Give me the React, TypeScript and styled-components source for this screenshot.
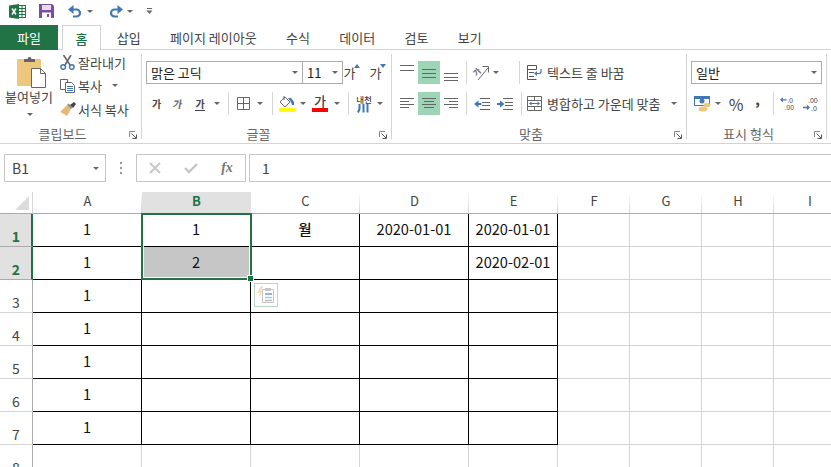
import React from 'react';
import styled, { createGlobalStyle } from 'styled-components';

const GREEN = '#217346';
const LINE = '#d4d4d4';

const Global = createGlobalStyle`
  html, body { margin: 0; padding: 0; background: #fff; }
  * { box-sizing: border-box; }
`;

const Page = styled.div`
  width: 831px;
  height: 467px;
  overflow: hidden;
  display: flex;
  flex-direction: column;
  background: #fff;
  color: #444;
  font-family: "Noto Sans CJK KR", "Noto Sans", sans-serif;
  font-size: 13px;
`;

/* quick access */
const TitleBar = styled.div`
  height: 25px;
  display: flex;
  align-items: center;
  padding: 0 0 3px 9px;
  flex-shrink: 0;
`;

const QuickItem = styled.span<{ $left?: number }>`
  display: inline-flex;
  align-items: center;
  margin-left: ${p => p.$left ?? 0}px;
`;

/* tabs */
const TabBar = styled.div`
  height: 25px;
  display: flex;
  flex-shrink: 0;
  border-bottom: 1px solid ${LINE};
`;

const FileTab = styled.div`
  width: 58px;
  height: 25px;
  background: ${GREEN};
  color: #fff;
  display: flex;
  align-items: center;
  justify-content: center;
  margin-right: 4px;
`;

const HomeTab = styled.div`
  width: 39px;
  height: 25px;
  border: 1px solid ${LINE};
  border-bottom: none;
  background: #fff;
  color: ${GREEN};
  font-weight: 500;
  display: flex;
  align-items: center;
  justify-content: center;
  margin-right: 1px;
`;

const Tab = styled.div`
  padding: 0 14.7px;
  height: 24px;
  display: flex;
  align-items: center;
  white-space: nowrap;
`;

/* ribbon */
const Ribbon = styled.div`
  height: 94px;
  flex-shrink: 0;
  display: flex;
  padding-top: 4px;
  border-bottom: 1px solid ${LINE};
`;

const Group = styled.div<{ $w: number }>`
  width: ${p => p.$w}px;
  height: 89px;
  display: flex;
  flex-direction: column;
  justify-content: space-between;
`;

const GroupDivider = styled.div`
  width: 1px;
  height: 85px;
  background: ${LINE};
`;

const GroupBody = styled.div`
  display: flex;
  padding: 7px 0 0 4px;
`;

const ClipBody = styled.div`
  display: flex;
`;

const Footer = styled.div`
  height: 20px;
  display: flex;
  align-items: center;
  color: #666;
`;

const FooterLabel = styled.div`
  flex: 1;
  text-align: center;
  padding-right: 4px;
  white-space: nowrap;
`;

const Launcher = styled.svg`
  margin: 4px 4px 0 0;
`;

const Stack = styled.div<{ $w?: number }>`
  display: flex;
  flex-direction: column;
  gap: 8px;
  ${p => (p.$w ? `width: ${p.$w}px;` : '')}
`;

const ActionStack = styled(Stack)`
  padding-left: 3px;
`;

const Row = styled.div`
  display: flex;
  align-items: center;
  height: 23px;
`;

const Slot = styled.div<{ $w: number; $on?: boolean }>`
  width: ${p => p.$w}px;
  height: 23px;
  flex-shrink: 0;
  display: flex;
  align-items: center;
  justify-content: center;
  background: ${p => (p.$on ? '#9fd5b7' : 'transparent')};
`;

const Sep = styled.div<{ $w: number; $push?: boolean }>`
  width: ${p => p.$w}px;
  height: 23px;
  flex-shrink: 0;
  ${p => (p.$push ? 'margin-left: auto;' : '')}
  display: flex;
  justify-content: center;
  &::before {
    content: "";
    width: 1px;
    background: ${LINE};
  }
`;

const Caret = styled.span`
  display: inline-block;
  width: 0;
  height: 0;
  border-left: 3px solid transparent;
  border-right: 3px solid transparent;
  border-top: 3px solid #666;
`;

const PasteButton = styled.div`
  width: 60px;
  padding-top: 2px;
  display: flex;
  flex-direction: column;
  align-items: center;
`;

const PasteArt = styled.span`
  display: flex;
  margin-left: 3px;
`;

const PasteText = styled.div`
  line-height: 18px;
  margin: 0 0 7px -2px;
  white-space: nowrap;
`;

const ClipList = styled.div`
  display: flex;
  flex-direction: column;
  gap: 9.5px;
  padding-top: 1px;
`;

const ClipItem = styled.div`
  height: 14px;
  display: flex;
  align-items: center;
  white-space: nowrap;
`;

const ClipIcon = styled.span`
  width: 18px;
  display: flex;
`;

const ClipCaret = styled.span`
  display: flex;
  margin-left: 10px;
`;

const Select = styled.div<{ $w: number; $joined?: boolean }>`
  width: ${p => p.$w}px;
  height: 23px;
  flex-shrink: 0;
  border: 1px solid #ababab;
  ${p => (p.$joined ? 'border-left: none;' : '')}
  background: #fff;
  color: #222;
  display: flex;
  align-items: center;
  justify-content: space-between;
  padding: 0 4px 0 4px;
`;

const Ga = styled.span<{ $italic?: boolean; $under?: boolean }>`
  font-size: 10px;
  font-weight: 700;
  line-height: 13px;
  color: #444;
  ${p => (p.$italic ? 'transform: skewX(-10deg); color: #666;' : '')}
  ${p => (p.$under ? 'border-bottom: 1px solid #444;' : '')}
`;

const GrowGa = styled.span`
  font-size: 13px;
  line-height: 15px;
  margin-bottom: 1px;
`;

const SmallMark = styled.svg`
  margin: -13px 0 0 -1px;
`;

const ColorPick = styled.div<{ $bar: string }>`
  display: flex;
  flex-direction: column;
  align-items: center;
  width: 16px;
  height: 18px;
  margin-bottom: 2px;
  justify-content: flex-end;
  border-bottom: 4px solid ${p => p.$bar};
`;

const ColorGa = styled.span`
  font-size: 13px;
  line-height: 14px;
  font-weight: 500;
`;

const Phonetic = styled.div`
  display: flex;
  flex-direction: column;
  align-items: center;
`;

const PhoneticText = styled.span`
  font-size: 8.5px;
  line-height: 9px;
  font-weight: 500;
  white-space: nowrap;
`;

const TextAction = styled.div`
  height: 23px;
  display: flex;
  align-items: center;
  white-space: nowrap;
  gap: 5px;
`;

const ActionCaret = styled.span`
  display: flex;
  margin-left: 6px;
`;

const Percent = styled.span`
  font-size: 16px;
  color: #444;
`;

const Comma = styled.span`
  font-size: 13px;
  font-weight: 900;
  line-height: 12px;
  margin-bottom: 8px;
`;

/* formula bar */
const FormulaBar = styled.div`
  height: 28px;
  margin: 10px 0;
  flex-shrink: 0;
  display: flex;
  padding-left: 4px;
`;

const NameBox = styled.div`
  width: 102px;
  border: 1px solid #c6c6c6;
  display: flex;
  align-items: center;
  justify-content: space-between;
  padding: 0 6px 0 7px;
  font-size: 14px;
`;

const Dots = styled.div`
  width: 30px;
  display: flex;
  flex-direction: column;
  align-items: center;
  justify-content: center;
  gap: 3px;
  & > span {
    width: 2px;
    height: 2px;
    background: #999;
  }
`;

const FxBox = styled.div`
  width: 110px;
  border: 1px solid #c6c6c6;
  display: flex;
  align-items: center;
`;

const FxSlot = styled.div`
  flex: 1;
  display: flex;
  justify-content: center;
  align-items: center;
`;

const FxText = styled.span`
  font-family: "Liberation Serif", serif;
  font-style: italic;
  font-weight: 700;
  font-size: 14px;
  color: #777;
`;

const FormulaInput = styled.div`
  flex: 1;
  margin-left: 3px;
  margin-right: -2px;
  border: 1px solid #c6c6c6;
  display: flex;
  align-items: center;
  padding-left: 12px;
  font-size: 14px;
`;

/* sheet */
const Sheet = styled.div`
  position: relative;
  display: grid;
  grid-template-columns: 33px 109px 109px 109px 109px 89px 72px 72px 72px 72px;
  grid-template-rows: 22px;
  grid-auto-rows: 33px;
`;

const Corner = styled.div`
  border-bottom: 1px solid #ababab;
  border-right: 1px solid ${LINE};
  position: relative;
  &::after {
    content: "";
    position: absolute;
    right: 3px;
    bottom: 3px;
    border-left: 14px solid transparent;
    border-bottom: 14px solid #dcdcdc;
  }
`;

const ColHead = styled.div<{ $on?: boolean }>`
  border-bottom: 1px solid #ababab;
  padding-bottom: 4px;
  display: flex;
  align-items: center;
  justify-content: center;
  background: ${p =>
    p.$on
      ? '#e1e1e1'
      : `linear-gradient(#fff, ${LINE}) right / 1px 100% no-repeat`};
  color: ${p => (p.$on ? GREEN : '#444')};
  font-weight: ${p => (p.$on ? 700 : 400)};
`;

const RowHead = styled.div<{ $on?: boolean }>`
  border-bottom: 1px solid ${p => (p.$on ? '#ababab' : LINE)};
  border-right: ${p => (p.$on ? `2px solid ${GREEN}` : '1px solid #ababab')};
  background: ${p => (p.$on ? '#e1e1e1' : '#fff')};
  color: ${p => (p.$on ? GREEN : '#444')};
  font-weight: ${p => (p.$on ? 700 : 400)};
  text-align: center;
  padding: ${p => (p.$on ? '12px 0 0 1px' : '12px 0 0')};
  line-height: 20px;
  font-size: 14px;
`;

const Cell = styled.div<{ $black?: boolean; $fill?: boolean; $strong?: boolean }>`
  border-right: 1px solid ${p => (p.$black ? '#000' : LINE)};
  border-bottom: 1px solid ${p => (p.$black ? '#000' : LINE)};
  background: ${p => (p.$fill ? '#c6c6c6' : '#fff')};
  color: #111;
  font-size: 14.6px;
  font-weight: ${p => (p.$strong ? 500 : 400)};
  padding-bottom: 3px;
  display: flex;
  align-items: center;
  justify-content: center;
  white-space: nowrap;
`;

const Selection = styled.div`
  position: absolute;
  left: 141px;
  top: 21px;
  width: 111px;
  height: 67px;
  border: 2px solid ${GREEN};
  box-shadow: inset 0 0 0 1px #fff;
  pointer-events: none;
`;

const FillHandle = styled.div`
  position: absolute;
  right: -4px;
  bottom: -4px;
  width: 7px;
  height: 7px;
  background: ${GREEN};
  border: 1px solid #fff;
`;

const PasteOptions = styled.div`
  position: absolute;
  left: 254px;
  top: 91px;
  width: 24px;
  height: 24px;
  border: 1px solid #b9d6c7;
  background: #fff;
  display: flex;
  align-items: center;
  justify-content: center;
`;

/* icons */
const ExcelLogo = () => (
  <svg width="18" height="15" viewBox="0 0 18 15">
    <rect x="6.5" y="1.5" width="10" height="12" fill="#fff" stroke={GREEN} />
    <path d="M10 4.5h6M10 7.5h6M10 10.5h6M13 2v11" stroke={GREEN} strokeWidth="1" />
    <path d="M0 1.6 10 0v15L0 13.4z" fill={GREEN} />
    <path d="M3 4.5 7 10.5M7 4.5 3 10.5" stroke="#fff" strokeWidth="1.5" />
  </svg>
);

const SaveIcon = () => (
  <svg width="15" height="14" viewBox="0 0 15 14">
    <path d="M0 0h13l2 2v12H0z" fill="#7d4d9e" />
    <rect x="3" y="1" width="9" height="5" fill="#e7dcef" />
    <rect x="3" y="8.5" width="9" height="5.5" fill="#fff" />
    <rect x="8" y="10" width="2" height="3" fill="#7d4d9e" />
  </svg>
);

const UndoIcon = ({ flip }: { flip?: boolean }) => (
  <svg width="15" height="13" viewBox="0 0 15 13" transform={flip ? 'scale(-1 1)' : undefined}>
    <path d="M0 4.5 5.5 0v9z" fill="#3f78b4" />
    <path d="M4 4.5h4.5a3.5 3.5 0 0 1 0 7H5" fill="none" stroke="#3f78b4" strokeWidth="2.2" />
  </svg>
);

const CustomizeIcon = () => (
  <svg width="7" height="6" viewBox="0 0 7 6">
    <path d="M1 .5h5" stroke="#666" />
    <path d="M.5 2.5h6L3.5 6z" fill="#666" />
  </svg>
);

const PasteIcon = () => (
  <svg width="29" height="32" viewBox="0 0 29 32">
    <rect x="0" y="3" width="24" height="27" rx="1" fill="#eec77f" />
    <path d="M7 6V3h3.5a2 2 0 0 1 4 0H18v3z" fill="#666" />
    <path d="M14.5 12.5h9l5 5v14h-14z" fill="#fff" stroke="#666" />
    <path d="M23.5 12.5v5h5" fill="none" stroke="#666" />
  </svg>
);

const ScissorsIcon = () => (
  <svg width="15" height="15" viewBox="0 0 15 15">
    <path d="M3.5 0 10 10M11 0 5 10" stroke="#666" strokeWidth="1.6" />
    <circle cx="3.2" cy="12" r="2.3" fill="none" stroke="#3f78b4" strokeWidth="1.5" />
    <circle cx="11.8" cy="12" r="2.3" fill="none" stroke="#3f78b4" strokeWidth="1.5" />
  </svg>
);

const CopyIcon = () => (
  <svg width="15" height="14" viewBox="0 0 15 14">
    <path d="M.5.5h7v10h-7z" fill="#fff" stroke="#666" />
    <path d="M5.5 3.5h6l3 3v7h-9z" fill="#fff" stroke="#666" />
    <path d="M7 7.5h6M7 9.5h6M7 11.5h6" stroke="#3f78b4" />
  </svg>
);

const BrushIcon = () => (
  <svg width="16" height="14" viewBox="0 0 16 14">
    <path d="M0 10 7 3l4 4-4 7-3-2z" fill="#e6b872" />
    <path d="M7 3l1.5-1.5 4 4L11 7z" fill="#888" />
    <path d="M10 3l4-3 2 2-3 4z" fill="#444" />
  </svg>
);

const LauncherIcon = () => (
  <Launcher width="8" height="8" viewBox="0 0 8 8">
    <path d="M.5 6V.5H6" fill="none" stroke="#888" />
    <path d="M2.5 2.5 7 7M7.5 3.5v4h-4" fill="none" stroke="#555" />
  </Launcher>
);

const GrowMark = ({ down }: { down?: boolean }) => (
  <SmallMark width="6" height="5" viewBox="0 0 6 5">
    <path d={down ? 'M0 0h6L3 4z' : 'M0 4h6L3 0z'} fill="#3f78b4" />
  </SmallMark>
);

const BorderIcon = () => (
  <svg width="13" height="13" viewBox="0 0 13 13">
    <path d="M.5.5h12v12H.5zM6.5.5v12M.5 6.5h12" fill="none" stroke="#666" />
  </svg>
);

const BucketIcon = () => (
  <svg width="16" height="12" viewBox="0 0 16 12">
    <path d="M1 6 6 1l5 5-5 5z" fill="#fff" stroke="#666" />
    <path d="M5 0v4" stroke="#666" />
    <path d="M9 2h3l3 4v3l-2 0-1-3z" fill="#3f78b4" />
  </svg>
);

const PhoneticBars = () => (
  <svg width="13" height="9" viewBox="0 0 13 9">
    <path d="M2.5 0v5L1 8.5M6.5 0v8.5M10.5 0v8.5" fill="none" stroke="#3f78b4" strokeWidth="2" />
  </svg>
);

const Lines = ({ rows, w = 14, h = 13 }: { rows: [number, number, number][]; w?: number; h?: number }) => (
  <svg width={w} height={h} viewBox={`0 0 ${w} ${h}`}>
    {rows.map(([x1, x2, y], i) => (
      <path key={i} d={`M${x1} ${y + 0.5}H${x2}`} stroke="#666" />
    ))}
  </svg>
);

const OrientIcon = () => (
  <svg width="20" height="20" viewBox="0 0 20 20">
    <text x="3.4" y="12" fontSize="8" fontWeight="700" fill="#666" fontFamily="Noto Sans CJK KR" transform="rotate(-45 7 9)">가</text>
    <path d="M18 5 8 17" stroke="#666" />
    <path d="M12.5 3.5H18.5V9.5" fill="none" stroke="#666" />
  </svg>
);

const IndentIcon = ({ right }: { right?: boolean }) => (
  <svg width="16" height="12" viewBox="0 0 16 12">
    <path d="M6 .5h10M8 4.5h8M8 7.5h8M6 11.5h10" stroke="#666" />
    {right ? (
      <path d="M0 5h3V2.5L7.5 6 3 9.5V7H0z" fill="#3f78b4" />
    ) : (
      <path d="M7.5 5h-3V2.5L0 6l4.5 3.5V7h3z" fill="#3f78b4" />
    )}
  </svg>
);

const WrapIcon = () => (
  <svg width="15" height="15" viewBox="0 0 15 15">
    <path d="M.5.5h9v4h-9zM.5 4.5v10h9M2 7.5h5M2 11.5h5" fill="none" stroke="#555" />
    <path d="M14 4v2.5a2 2 0 0 1-2 2H8" fill="none" stroke="#3f78b4" strokeWidth="1.2" />
    <path d="M7 8.5 10 6v5z" fill="#3f78b4" />
  </svg>
);

const MergeIcon = () => (
  <svg width="15" height="15" viewBox="0 0 15 15">
    <path d="M.5.5h14v14H.5zM.5 4.5h14M.5 10.5h14M7.5.5v4M7.5 10.5v4" fill="none" stroke="#666" />
    <path d="M2.5 7.5h10" stroke="#3f78b4" />
    <path d="M2 7.5 4.5 5.5v4zM13 7.5l-2.5-2v4z" fill="#3f78b4" />
  </svg>
);

const MoneyIcon = () => (
  <svg width="17" height="16" viewBox="0 0 17 16">
    <rect x=".5" y=".5" width="15" height="9" fill="#fff" stroke="#3f78b4" />
    <rect x="0" y="0" width="16" height="3" fill="#3f78b4" />
    <circle cx="8" cy="5" r="2.5" fill="#3f78b4" />
    <ellipse cx="9" cy="13" rx="4.5" ry="2.5" fill="#eec77f" />
    <ellipse cx="13" cy="9" rx="3.5" ry="2" fill="#eec77f" />
  </svg>
);

const DecimalIcon = ({ more }: { more?: boolean }) => (
  <svg width="17" height="16" viewBox="0 0 17 16">
    <text x={more ? 5 : 8} y="6.5" fontSize="7" fill="#444" fontFamily="Liberation Sans">{more ? '.00' : '.0'}</text>
    <text x={more ? 8 : 5} y="14.5" fontSize="7" fill="#444" fontFamily="Liberation Sans">{more ? '.0' : '.00'}</text>
    {more ? (
      <path d="M0 11.5h6M4 9.5l2 2-2 2" fill="none" stroke="#3f78b4" strokeWidth="1.3" />
    ) : (
      <path d="M7 3.5H1M3 1.5l-2 2 2 2" fill="none" stroke="#3f78b4" strokeWidth="1.3" />
    )}
  </svg>
);

const CrossIcon = () => (
  <svg width="12" height="12" viewBox="0 0 12 12">
    <path d="M1 1l10 10M11 1 1 11" stroke="#c6c6c6" strokeWidth="2" />
  </svg>
);

const CheckIcon = () => (
  <svg width="14" height="12" viewBox="0 0 14 12">
    <path d="M1 6l4 4 8-8" fill="none" stroke="#c6c6c6" strokeWidth="2.4" />
  </svg>
);

const PasteOptionsIcon = () => (
  <svg width="18" height="18" viewBox="0 0 18 18">
    <path d="M4 0 0 7h3l-2 5 6-7H4l2-5z" fill="#f7dcc0" />
    <path d="M5.5 3.5h11v13h-11z" fill="#fff" stroke="#c6c6c6" />
    <rect x="8" y="2" width="6" height="3" fill="#c6c6c6" />
    <path d="M8 8h7" stroke="#8fb6da" strokeWidth="2" />
    <path d="M8 11.5h7" stroke="#a9cfb9" strokeWidth="1.5" />
    <path d="M8 14.5h7" stroke="#bbb" strokeWidth="1.5" />
  </svg>
);

const columns = ['A', 'B', 'C', 'D', 'E', 'F', 'G', 'H', 'I'];

const values: Record<string, string> = {
  A1: '1', A2: '1', A3: '1', A4: '1', A5: '1', A6: '1', A7: '1',
  B1: '1', B2: '2',
  C1: '월',
  D1: '2020-01-01',
  E1: '2020-01-01', E2: '2020-02-01',
};

const tabs = ['삽입', '페이지 레이아웃', '수식', '데이터', '검토', '보기'];

const vTop: [number, number, number][] = [[0, 14, 3], [0, 14, 8]];
const vMid: [number, number, number][] = [[0, 14, 7], [0, 14, 11], [0, 14, 15]];
const vBot: [number, number, number][] = [[0, 14, 11], [0, 14, 15], [0, 14, 18]];
const hLeft: [number, number, number][] = [[0, 14, 1], [0, 9, 4], [0, 14, 7], [0, 9, 10]];
const hCenter: [number, number, number][] = [[0, 14, 1], [2, 12, 4], [0, 14, 7], [2, 12, 10]];
const hRight: [number, number, number][] = [[0, 14, 1], [5, 14, 4], [0, 14, 7], [5, 14, 10]];

const App = () => {
  return (
    <Page>
      <Global />
      <TitleBar>
        <ExcelLogo />
        <QuickItem $left={12}><SaveIcon /></QuickItem>
        <QuickItem $left={14}><UndoIcon /></QuickItem>
        <QuickItem $left={4}><Caret /></QuickItem>
        <QuickItem $left={15}><UndoIcon flip /></QuickItem>
        <QuickItem $left={4}><Caret /></QuickItem>
        <QuickItem $left={13}><CustomizeIcon /></QuickItem>
      </TitleBar>

      <TabBar>
        <FileTab>파일</FileTab>
        <HomeTab>홈</HomeTab>
        {tabs.map(t => <Tab key={t}>{t}</Tab>)}
      </TabBar>

      <Ribbon>
        <Group $w={141}>
          <ClipBody>
            <PasteButton>
              <PasteArt><PasteIcon /></PasteArt>
              <PasteText>붙여넣기</PasteText>
              <Caret />
            </PasteButton>
            <ClipList>
              <ClipItem><ClipIcon><ScissorsIcon /></ClipIcon>잘라내기</ClipItem>
              <ClipItem><ClipIcon><CopyIcon /></ClipIcon>복사<ClipCaret><Caret /></ClipCaret></ClipItem>
              <ClipItem><ClipIcon><BrushIcon /></ClipIcon>서식 복사</ClipItem>
            </ClipList>
          </ClipBody>
          <Footer><FooterLabel>클립보드</FooterLabel><LauncherIcon /></Footer>
        </Group>
        <GroupDivider />

        <Group $w={249}>
          <GroupBody>
            <Stack>
              <Row>
                <Select $w={157}>맑은 고딕<Caret /></Select>
                <Select $w={40} $joined>11<Caret /></Select>
                <Slot $w={18}><GrowGa>가</GrowGa><GrowMark /></Slot>
                <Slot $w={34}><GrowGa>가</GrowGa><GrowMark down /></Slot>
              </Row>
              <Row>
                <Slot $w={21}><Ga>가</Ga></Slot>
                <Slot $w={22}><Ga $italic>가</Ga></Slot>
                <Slot $w={22}><Ga $under>가</Ga></Slot>
                <Slot $w={12}><Caret /></Slot>
                <Sep $w={10} />
                <Slot $w={20}><BorderIcon /></Slot>
                <Slot $w={14}><Caret /></Slot>
                <Sep $w={10} />
                <Slot $w={20}>
                  <ColorPick $bar="#ffff00"><BucketIcon /></ColorPick>
                </Slot>
                <Slot $w={12}><Caret /></Slot>
                <Slot $w={22}>
                  <ColorPick $bar="#ff0000"><ColorGa>가</ColorGa></ColorPick>
                </Slot>
                <Slot $w={12}><Caret /></Slot>
                <Sep $w={10} />
                <Slot $w={22}>
                  <Phonetic>
                    <PhoneticText>내천</PhoneticText>
                    <PhoneticBars />
                  </Phonetic>
                </Slot>
                <Slot $w={10}><Caret /></Slot>
              </Row>
            </Stack>
          </GroupBody>
          <Footer><FooterLabel>글꼴</FooterLabel><LauncherIcon /></Footer>
        </Group>
        <GroupDivider />

        <Group $w={294}>
          <GroupBody>
            <Stack $w={128}>
              <Row>
                <Slot $w={22}><Lines rows={vTop} h={21} /></Slot>
                <Slot $w={22} $on><Lines rows={vMid} h={21} /></Slot>
                <Slot $w={22}><Lines rows={vBot} h={21} /></Slot>
                <Sep $w={8} />
                <Slot $w={20}><OrientIcon /></Slot>
                <Slot $w={12}><Caret /></Slot>
                <Sep $w={10} $push />
              </Row>
              <Row>
                <Slot $w={22}><Lines rows={hLeft} /></Slot>
                <Slot $w={22} $on><Lines rows={hCenter} /></Slot>
                <Slot $w={22}><Lines rows={hRight} /></Slot>
                <Sep $w={8} />
                <Slot $w={23}><IndentIcon /></Slot>
                <Slot $w={23}><IndentIcon right /></Slot>
                <Sep $w={10} $push />
              </Row>
            </Stack>
            <ActionStack>
              <TextAction><WrapIcon />텍스트 줄 바꿈</TextAction>
              <TextAction>
                <MergeIcon />병합하고 가운데 맞춤
                <ActionCaret><Caret /></ActionCaret>
              </TextAction>
            </ActionStack>
          </GroupBody>
          <Footer><FooterLabel>맞춤</FooterLabel><LauncherIcon /></Footer>
        </Group>
        <GroupDivider />

        <Group $w={139}>
          <GroupBody>
            <Stack>
              <Row><Select $w={131}>일반<Caret /></Select></Row>
              <Row>
                <Slot $w={22}><MoneyIcon /></Slot>
                <Slot $w={10}><Caret /></Slot>
                <Slot $w={26}><Percent>%</Percent></Slot>
                <Slot $w={17}><Comma>,</Comma></Slot>
                <Sep $w={14} />
                <Slot $w={16}><DecimalIcon /></Slot>
                <Slot $w={30}><DecimalIcon more /></Slot>
              </Row>
            </Stack>
          </GroupBody>
          <Footer><FooterLabel>표시 형식</FooterLabel><LauncherIcon /></Footer>
        </Group>
        <GroupDivider />
      </Ribbon>

      <FormulaBar>
        <NameBox>B1<Caret /></NameBox>
        <Dots><span /><span /><span /></Dots>
        <FxBox>
          <FxSlot><CrossIcon /></FxSlot>
          <FxSlot><CheckIcon /></FxSlot>
          <FxSlot><FxText>fx</FxText></FxSlot>
        </FxBox>
        <FormulaInput>1</FormulaInput>
      </FormulaBar>

      <Sheet>
        <Corner />
        {columns.map(c => <ColHead key={c} $on={c === 'B'}>{c}</ColHead>)}
        {[1, 2, 3, 4, 5, 6, 7, 8].map(r => (
          <React.Fragment key={r}>
            <RowHead $on={r < 3}>{r}</RowHead>
            {columns.map((c, i) => (
              <Cell
                key={c}
                $black={r < 8 && i < 5}
                $fill={c === 'B' && r === 2}
                $strong={c === 'C' && r === 1}
              >
                {values[`${c}${r}`]}
              </Cell>
            ))}
          </React.Fragment>
        ))}
        <Selection><FillHandle /></Selection>
        <PasteOptions><PasteOptionsIcon /></PasteOptions>
      </Sheet>
    </Page>
  );
};

export default App;
